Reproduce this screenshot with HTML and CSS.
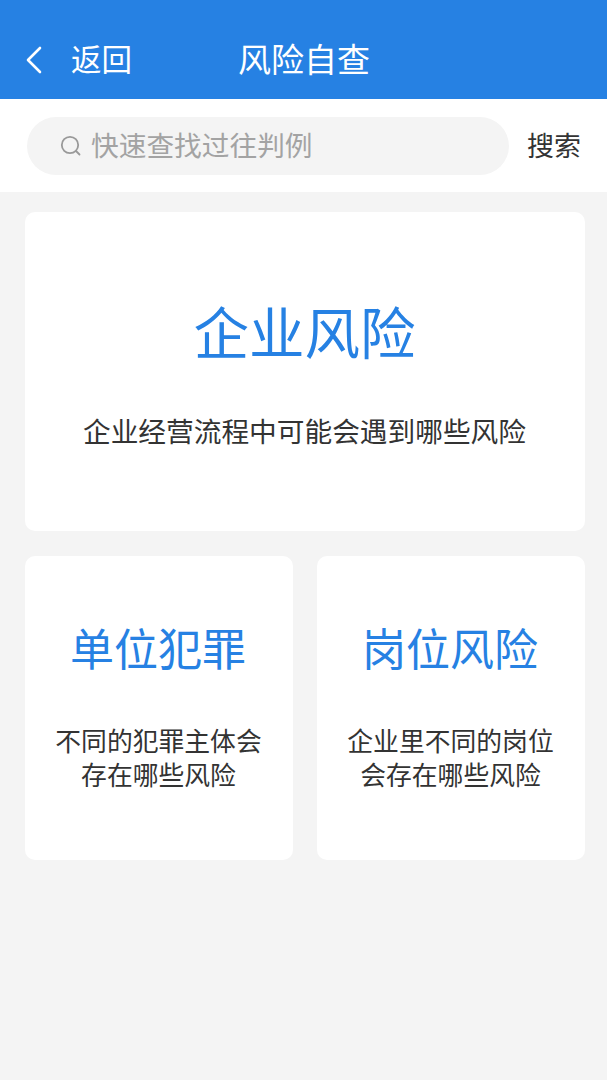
FILE: index.html
```html
<!DOCTYPE html>
<html lang="zh-CN">
<head>
  <meta charset="UTF-8">
  <meta name="viewport" content="width=device-width, initial-scale=1">
  <title>风险自查</title>
  <link rel="stylesheet" href="styles.css">
</head>
<body>
  <header class="top-bar">
    <svg class="back-icon" width="18" height="28" viewBox="0 0 18 28">
      <path d="M15 2 L3 14 L15 26" fill="none" stroke="#fff" stroke-width="2.6" stroke-linecap="round" stroke-linejoin="round"/>
    </svg>
    <span class="back-text">返回</span>
    <h1 class="page-title">风险自查</h1>
  </header>

  <section class="search-bar">
    <div class="search-box">
      <svg class="search-icon" width="22" height="22" viewBox="0 0 22 22">
        <circle cx="10" cy="10" r="8.2" fill="none" stroke="#999" stroke-width="1.8"/>
        <path d="M16 16 L19.5 19.5" fill="none" stroke="#999" stroke-width="1.8" stroke-linecap="round"/>
      </svg>
      <span class="search-placeholder">快速查找过往判例</span>
    </div>
    <span class="search-btn">搜索</span>
  </section>

  <main class="cards">
    <div class="card card-wide">
      <h2 class="card-title-big">企业风险</h2>
      <p class="card-desc-big">企业经营流程中可能会遇到哪些风险</p>
    </div>
    <div class="card card-small">
      <h2 class="card-title">单位犯罪</h2>
      <p class="card-desc">不同的犯罪主体会<br>存在哪些风险</p>
    </div>
    <div class="card card-small">
      <h2 class="card-title">岗位风险</h2>
      <p class="card-desc">企业里不同的岗位<br>会存在哪些风险</p>
    </div>
  </main>
</body>
</html>
```

FILE: styles.css
```css
* {
  margin: 0;
  padding: 0;
  box-sizing: border-box;
  font-family: "Noto Sans CJK SC", "Noto Sans", sans-serif;
  font-weight: 400;
}

body {
  background-color: #f4f4f4;
  height: 1080px;
  overflow: hidden;
}

.top-bar {
  height: 99px;
  background-color: #2681e3;
  color: #fff;
  display: flex;
  align-items: center;
  padding: 21px 0 0 25px;
}

.back-icon {
  flex-shrink: 0;
}

.back-text {
  font-size: 30.5px;
  line-height: 40px;
  margin-left: 28px;
  margin-bottom: 4px;
}

.page-title {
  font-size: 33px;
  line-height: 42px;
  margin-left: 106px;
  margin-bottom: 4px;
}

.search-bar {
  height: 93px;
  background-color: #fff;
  display: flex;
  align-items: center;
  padding: 0 25px 0 27px;
}

.search-box {
  width: 482px;
  height: 58px;
  background-color: #f4f4f4;
  border-radius: 29px;
  display: flex;
  align-items: center;
  padding-left: 33px;
}

.search-placeholder {
  font-size: 27.7px;
  color: #a3a3a3;
  margin-left: 9px;
  padding-bottom: 4px;
}

.search-btn {
  font-size: 27px;
  color: #333;
  margin-left: 18px;
  padding-bottom: 2px;
}

.cards {
  display: grid;
  grid-template-columns: 268px 268px;
  column-gap: 24px;
  row-gap: 25px;
  padding: 20px 22px 0 25px;
}

.card {
  background-color: #fff;
  border-radius: 10px;
  text-align: center;
}

.card-wide {
  grid-column: 1 / 3;
  height: 319px;
  padding-top: 78px;
}

.card-small {
  height: 304px;
  padding-top: 60px;
}

.card-title-big {
  font-size: 55.5px;
  line-height: 80px;
  color: #2681e3;
  padding-right: 1px;
}

.card-desc-big {
  font-size: 27.7px;
  line-height: 40px;
  color: #333;
  margin-top: 40px;
  padding-right: 1px;
}

.card-title {
  font-size: 44px;
  line-height: 62px;
  color: #2681e3;
  padding-right: 2px;
}

.card-desc {
  font-size: 25.8px;
  line-height: 34px;
  color: #333;
  margin-top: 45px;
  padding-right: 1px;
}
```
